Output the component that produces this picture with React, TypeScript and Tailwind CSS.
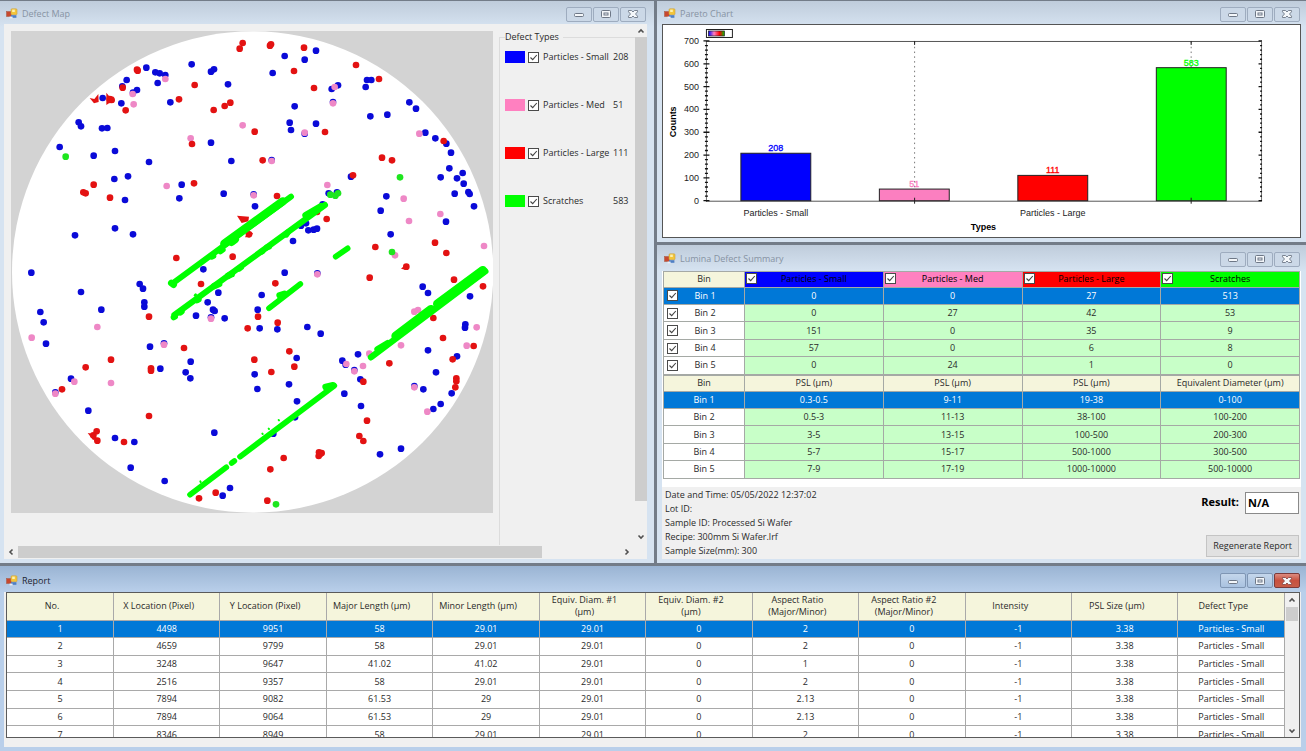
import clsx from "clsx";
import type { ReactNode } from "react";

type Point = [number, number];

const defectTypes = [
  { name: "Particles - Small", count: 208, swatch: "bg-[#0000ff]", color: "#0000ff" },
  { name: "Particles - Med", count: 51, swatch: "bg-[#ff80c0]", color: "#fb7fc0" },
  { name: "Particles - Large", count: 111, swatch: "bg-[#ff0000]", color: "#ff0000" },
  { name: "Scratches", count: 583, swatch: "bg-[#00ff00]", color: "#00ff00" },
];

// Wafer defects, one entry per quadrant, in thirds of a pixel
const quadrants: { dx: number; dy: number; blue: Point[]; pink: Point[]; red: Point[]; green: Point[] }[] = [
  {
    dx: 0,
    dy: 0,
    blue: [
      [436, 203], [463, 217], [476, 220], [493, 225], [470, 249], [572, 193], [639, 208], [630, 215], [681, 253],
      [377, 240], [364, 259], [408, 270], [396, 278], [361, 310], [508, 307], [305, 294], [233, 367], [240, 379],
      [303, 385], [319, 384], [176, 441], [278, 467], [342, 453], [444, 486], [630, 428], [691, 483], [381, 529],
      [340, 537], [372, 600], [542, 554], [535, 595], [668, 581], [758, 583], [762, 619], [342, 685], [396, 703],
      [222, 706],
    ],
    pink: [[493, 237], [395, 282], [398, 313], [725, 376], [569, 415], [497, 558], [758, 586]],
    red: [
      [725, 129], [716, 146], [410, 212], [408, 209], [365, 263], [581, 255], [534, 298], [688, 308], [671, 318],
      [638, 330], [374, 331], [326, 297], [332, 300], [573, 432], [579, 550], [278, 554], [247, 577], [254, 580],
      [327, 593], [526, 774], [695, 770], [744, 703],
    ],
    green: [[194, 470]],
  },
  {
    dx: 720,
    dy: 0,
    blue: [
      [131, 168], [225, 152], [191, 179], [95, 219], [272, 267], [291, 256], [276, 306], [161, 319], [146, 368],
      [150, 390], [225, 371], [191, 401], [378, 240], [391, 240], [374, 261], [388, 349], [439, 344], [505, 307],
      [525, 326], [553, 398], [583, 415], [616, 431], [630, 458], [625, 505], [599, 532], [648, 535], [665, 519],
      [668, 551], [641, 581], [682, 576], [686, 582], [699, 619], [615, 665], [436, 589], [419, 632], [449, 703],
      [330, 530], [263, 580], [288, 577], [92, 480], [180, 677], [195, 670], [202, 691], [218, 689], [228, 686],
      [156, 723], [245, 613],
    ],
    pink: [
      [281, 261], [276, 310], [191, 398], [535, 401], [92, 483], [259, 555], [488, 596], [504, 663], [598, 642],
      [729, 738], [462, 766],
    ],
    red: [
      [90, 133], [87, 137], [189, 143], [159, 213], [219, 264], [345, 195], [414, 237], [252, 396], [41, 395],
      [65, 481], [608, 423], [423, 473], [453, 481], [336, 526], [108, 588], [228, 636], [257, 657], [403, 741],
      [582, 728], [616, 759], [496, 800],
    ],
    green: [[477, 532], [453, 756], [268, 584], [283, 587], [291, 580]],
  },
  {
    dx: 0,
    dy: 780,
    blue: [
      [91, 38], [240, 96], [118, 156], [128, 187], [135, 251], [301, 149], [416, 72], [426, 86], [430, 127],
      [430, 140], [447, 260], [478, 326], [569, 305], [554, 337], [568, 355], [607, 28], [652, 98], [620, 127],
      [585, 167], [636, 149], [641, 153], [671, 175], [630, 172], [210, 356], [163, 397], [262, 452], [342, 534],
      [400, 546], [389, 623], [491, 663], [640, 518], [687, 684], [665, 707], [489, 250],
    ],
    pink: [[289, 201], [92, 233], [489, 254], [630, 176], [220, 365], [330, 369], [163, 401]],
    red: [
      [600, 72], [444, 170], [330, 299], [254, 322], [549, 264], [450, 325], [450, 332], [183, 388], [444, 468],
      [287, 514], [277, 526], [289, 542], [369, 546], [644, 698], [594, 715],
    ],
    green: [],
  },
  {
    dx: 720,
    dy: 780,
    blue: [
      [131, 38], [62, 105], [50, 149], [56, 205], [109, 208], [199, 201], [239, 221], [167, 294], [41, 343],
      [49, 387], [144, 373], [168, 424], [304, 302], [314, 314], [351, 283], [340, 330], [358, 358], [310, 401],
      [360, 438], [545, 80], [561, 99], [673, 193], [672, 203], [687, 109], [561, 271], [648, 289], [585, 337],
      [520, 378], [547, 388], [632, 400], [599, 432], [577, 447], [417, 583], [480, 566], [162, 472], [97, 521],
      [229, 40],
    ],
    pink: [
      [229, 43], [520, 155], [531, 150], [707, 202], [677, 257], [480, 256], [385, 281], [366, 318], [316, 312],
      [340, 334], [520, 382], [559, 455],
    ],
    red: [
      [103, 70], [51, 170], [20, 205], [110, 188], [145, 274], [40, 299], [160, 320], [91, 336], [386, 53],
      [639, 59], [726, 79], [577, 174], [606, 234], [698, 258], [635, 298], [646, 355], [646, 364], [643, 382],
      [445, 310], [367, 365], [378, 482], [355, 528], [367, 543], [128, 594], [88, 628], [79, 722], [234, 577],
      [242, 579], [233, 588], [238, 582],
    ],
    green: [[105, 733]],
  },
];

// x1, y1, x2, y2, width
const scratches = [
  [515, 850, 870, 590, 18],
  [670, 731, 845, 604, 25],
  [511, 849, 518, 854, 20],
  [632, 770, 637, 768, 18],
  [658, 754, 665, 749, 18],
  [692, 726, 702, 718, 24],
  [520, 945, 972, 615, 18],
  [518, 952, 522, 950, 18],
  [538, 938, 542, 935, 18],
  [640, 858, 654, 852, 20],
  [588, 900, 592, 898, 20],
  [582, 886, 584, 884, 8],
  [682, 827, 692, 822, 20],
  [714, 806, 720, 802, 18],
  [780, 756, 784, 754, 18],
  [798, 742, 804, 740, 18],
  [856, 704, 860, 698, 18],
  [915, 646, 960, 620, 22],
  [804, 925, 898, 852, 17],
  [836, 886, 850, 882, 20],
  [1004, 770, 1040, 745, 17],
  [1110, 1072, 1453, 814, 19],
  [1130, 1048, 1160, 1030, 20],
  [1184, 1008, 1290, 928, 26],
  [1310, 912, 1445, 812, 28],
  [567, 1484, 676, 1402, 17],
  [692, 1389, 700, 1383, 17],
  [717, 1370, 1000, 1157, 17],
  [974, 1161, 996, 1156, 20],
  [598, 1444, 599, 1446, 6],
  [784, 1301, 785, 1302, 6],
  [803, 1286, 804, 1287, 6],
  [833, 1260, 834, 1261, 6],
];

const wafer = {
  types: ["Particles - Small", "Particles - Med", "Particles - Large", "Scratches"],
  counts: [
    [0, 0, 27, 513],
    [0, 27, 42, 53],
    [151, 0, 35, 9],
    [57, 0, 6, 8],
    [0, 24, 1, 0],
  ],
  units: ["PSL (µm)", "PSL (µm)", "PSL (µm)", "Equivalent Diameter (µm)"],
  ranges: [
    ["0.3-0.5", "9-11", "19-38", "0-100"],
    ["0.5-3", "11-13", "38-100", "100-200"],
    ["3-5", "13-15", "100-500", "200-300"],
    ["5-7", "15-17", "500-1000", "300-500"],
    ["7-9", "17-19", "1000-10000", "500-10000"],
  ],
};

const reportColumns = [
  "No.",
  "X Location (Pixel)",
  "Y Location (Pixel)",
  "Major Length (µm)",
  "Minor Length (µm)",
  "Equiv. Diam. #1 (µm)",
  "Equiv. Diam. #2 (µm)",
  "Aspect Ratio (Major/Minor)",
  "Aspect Ratio #2 (Major/Minor)",
  "Intensity",
  "PSL Size (µm)",
  "Defect Type",
];

const reportRows = [
  ["1", "4498", "9951", "58", "29.01", "29.01", "0", "2", "0", "-1", "3.38", "Particles - Small"],
  ["2", "4659", "9799", "58", "29.01", "29.01", "0", "2", "0", "-1", "3.38", "Particles - Small"],
  ["3", "3248", "9647", "41.02", "41.02", "29.01", "0", "1", "0", "-1", "3.38", "Particles - Small"],
  ["4", "2516", "9357", "58", "29.01", "29.01", "0", "2", "0", "-1", "3.38", "Particles - Small"],
  ["5", "7894", "9082", "61.53", "29", "29.01", "0", "2.13", "0", "-1", "3.38", "Particles - Small"],
  ["6", "7894", "9064", "61.53", "29", "29.01", "0", "2.13", "0", "-1", "3.38", "Particles - Small"],
  ["7", "8346", "8949", "58", "29.01", "29.01", "0", "2", "0", "-1", "3.38", "Particles - Small"],
];

const FormIcon = () => (
  <svg viewBox="0 0 12 12" className="size-3 shrink-0">
    <rect x="0.5" y="3.5" width="5" height="5" fill="#c8482e" stroke="#a8604e" strokeWidth="0.6" />
    <rect x="5" y="0.8" width="6" height="6" rx="1" fill="#f3c53a" stroke="#c9a040" strokeWidth="0.6" />
    <rect x="6.2" y="1.6" width="2.6" height="2.4" fill="#fdf0b0" />
    <path d="M5 7.2h5.4v2.6H5z" fill="#4f7fc4" />
    <path d="M3.6 8.6h3v1.8h-3z" fill="#e9eef6" />
  </svg>
);

const CaptionButton = ({ kind, active }: { kind: "min" | "max" | "close"; active?: boolean }) => {
  const red = active && kind === "close";
  return (
    <button
      type="button"
      aria-label={kind}
      className={clsx(
        "w-[26px] h-[15px] flex items-center justify-center rounded-[2px] border",
        red
          ? "border-[#7c3a3a] bg-gradient-to-b from-[#dc8b80] via-[#c8503f] to-[#c75c48]"
          : active
            ? "border-[#7f96b4] bg-gradient-to-b from-[#c4d6eb] to-[#a9c2e0]"
            : "border-[#9eacbf] bg-[#cbd8e7]",
      )}
    >
      <svg viewBox="0 0 12 10" className="w-3 h-2.5" fill="#f4f7fa" stroke={red ? "#8a4a48" : "#6d7786"}>
        {kind === "min" && <rect x="1.5" y="4.5" width="9" height="3" rx="1" />}
        {kind === "max" && (
          <>
            <rect x="1.5" y="1.5" width="9" height="7" rx="1" />
            <rect x="4" y="4" width="4" height="2" fill="none" />
          </>
        )}
        {kind === "close" && (
          <path d="M1.500 1.500h3L6 3l1.500-1.500h3v1.300L8.500 5l2 2.200v1.300h-3L6 7 4.500 8.500h-3V7.200l2-2.200-2-2.200z" strokeWidth="0.9" />
        )}
      </svg>
    </button>
  );
};

interface WindowProps {
  title: string;
  active?: boolean;
  className?: string;
  titleClass: string;
  children: ReactNode;
}

const Window = ({ title, active, className, titleClass, children }: WindowProps) => (
  <section
    className={clsx(
      "flex flex-col min-w-0 border-t border-[#737c88] pb-1",
      active
        ? "bg-[linear-gradient(#9ab4d3,#b9cfea_26px,#b9cfea)]"
        : "bg-[linear-gradient(#bfccdb,#d6e3f1_26px,#d6e3f1)]",
      className,
    )}
  >
    <header className={clsx("flex items-center gap-1 pl-0.5 pt-[3px] pr-px shrink-0", titleClass)}>
      <FormIcon />
      <h2 className={clsx("flex-1 text-[9px]", active ? "text-[#1c2430]" : "text-[#8793a3]")}>{title}</h2>
      <div className="flex gap-px">
        <CaptionButton kind="min" active={active} />
        <CaptionButton kind="max" active={active} />
        <CaptionButton kind="close" active={active} />
      </div>
    </header>
    {children}
  </section>
);

const Check = ({ label, className }: { label: string; className?: string }) => (
  <span className={clsx("inline-block size-[11px] shrink-0", className ?? "relative")}>
    <input
      type="checkbox"
      defaultChecked
      aria-label={label}
      className="peer block appearance-none size-[11px] bg-white border border-[#4a4a4a]"
    />
    <svg
      viewBox="0 0 11 11"
      className="pointer-events-none absolute inset-0 hidden peer-checked:block"
      fill="none"
      stroke="#444"
      strokeWidth="1.1"
    >
      <path d="M2.500 5.500l2.200 2.200L8.800 3" />
    </svg>
  </span>
);

const Arrow = ({ d }: { d: string }) => (
  <svg viewBox="0 0 8 8" className="size-2" fill="none" stroke="#505050" strokeWidth="1.6">
    <path d={d} />
  </svg>
);

const arrows = {
  up: "M1.500 5.500L4 3l2.500 2.500",
  down: "M1.500 2.500L4 5l2.500-2.500",
  left: "M5.500 1.500L3 4l2.500 2.500",
  right: "M2.500 1.500L5 4 2.500 6.500",
};

const Dots = ({ points, fill }: { points: Point[]; fill: string }) => (
  <g fill={fill}>
    {points.map(([x, y], i) => (
      <circle key={i} cx={x} cy={y} r="10" />
    ))}
  </g>
);

const WaferMap = () => (
  <svg viewBox="30 93 1446 1446" className="block w-[482px] h-[482px] shrink-0">
    <rect x="30" y="93" width="1446" height="1446" fill="#d3d3d3" />
    <circle cx="755" cy="816" r="722" fill="#fff" />
    {quadrants.map((q, i) => (
      <g key={i} transform={`translate(${q.dx} ${q.dy})`}>
        <Dots points={q.blue} fill="#0a0ad8" />
        <Dots points={q.pink} fill="#ee88c6" />
        <Dots points={q.red} fill="#e31212" />
      </g>
    ))}
    <g fill="#e31212">
      <path d="M266 294l14 3 12-15 1 24-14 4z" />
      <path d="M316 278l8 10 14 2v18l-14 2-8 5z" />
      <path d="M708 647l36 3-2 14-20 5z" />
      <path d="M732 712l10-20 14 8-8 12z" />
      <path d="M260 1299l22 3 6 14-12 4z" />
      <path d="M1200 806l16-14v18z" />
    </g>
    <g stroke="#00ff00" strokeLinecap="round">
      {scratches.map(([x1, y1, x2, y2, w], i) => (
        <line key={i} x1={x1} y1={y1} x2={x2} y2={y2} strokeWidth={w} />
      ))}
    </g>
    {quadrants.map((q, i) => (
      <g key={i} transform={`translate(${q.dx} ${q.dy})`}>
        <Dots points={q.green} fill="#1ee61e" />
      </g>
    ))}
  </svg>
);

const DefectMap = () => (
  <Window title="Defect Map" titleClass="h-[23px]" className="border-r-2 border-b-2 pl-1 pr-[7px]">
    <div className="flex-1 flex flex-col bg-[#f0f0f0]">
      <div className="flex-1 flex pl-[7px]">
        <div className="pt-[7px] pb-8">
          <WaferMap />
        </div>
        <div className="flex-1 flex pt-[7px] pl-1.5">
          <fieldset className="flex-1 border-l border-t border-[#dcdcdc] pl-[5px] pr-1 min-w-0">
            <legend className="text-[9px] leading-3 pr-1">Defect Types</legend>
            <ul className="flex flex-col gap-9 pt-2">
              {defectTypes.map((type) => (
                <li key={type.name} className="flex items-center h-3 text-[9px]">
                  <span className={clsx("w-5 h-3 shrink-0", type.swatch)} />
                  <span className="flex items-center pl-[3px] pr-1">
                    <Check label={type.name} />
                  </span>
                  <span className="flex-1 whitespace-nowrap">{type.name}</span>
                  <span className="w-[18px]">{type.count}</span>
                </li>
              ))}
            </ul>
          </fieldset>
        </div>
        <div className="w-3 flex flex-col items-center">
          <span className="h-[13px] flex items-center">
            <Arrow d={arrows.up} />
          </span>
          <span className="flex-1 w-full bg-[#cdcdcd]" />
          <span className="h-11 flex items-end pb-1">
            <Arrow d={arrows.down} />
          </span>
        </div>
      </div>
      <div className="h-[14px] flex items-center">
        <span className="w-3.5 flex justify-center">
          <Arrow d={arrows.left} />
        </span>
        <span className="w-[524px] h-3 bg-[#cdcdcd]" />
        <span className="flex-1 flex justify-end pr-4">
          <Arrow d={arrows.right} />
        </span>
      </div>
    </div>
  </Window>
);

const plot = { left: 706, right: 1262, top: 41, bottom: 201, max: 700 };
const yOf = (value: number) => plot.bottom - (value / plot.max) * (plot.bottom - plot.top);

const ParetoChart = () => (
  <Window title="Pareto Chart" titleClass="h-[23px]" className="border-b-2 border-l pl-[5px] pr-[5px]">
    <svg
      viewBox="663 25 638 212"
      className="block w-full bg-white border border-[#555]"
      fontFamily="Liberation Sans, sans-serif"
      fontSize="9"
    >
      <defs>
        <linearGradient id="legend">
          <stop offset="0" stopColor="#0000ff" />
          <stop offset="0.35" stopColor="#ff80c0" />
          <stop offset="0.7" stopColor="#ff0000" />
          <stop offset="1" stopColor="#00c000" />
        </linearGradient>
      </defs>
      <rect x="706.5" y="29.5" width="26" height="8" fill="#fff" stroke="#222" />
      <rect x="708.500" y="31" width="16" height="5" fill="url(#legend)" stroke="#222" strokeWidth="0.7" />

      <path d="M706 41.500H1262M706 201.500H1262" stroke="#555" />
      <path d="M706.500 41V202M1262.500 41V202" stroke="#333" strokeWidth="0.7" />
      {Array.from({ length: 36 }, (_, i) => {
        const y = yOf(i * 20);
        const len = i % 5 === 0 ? 3 : 1.5;
        return (
          <path
            key={i}
            d={`M${706.5 - len} ${y}H${706.5 + len}M${1262.500 - len} ${y}H1263`}
            stroke="#111"
            strokeWidth="1.300"
          />
        );
      })}
      {[0, 100, 200, 300, 400, 500, 600, 700].map((value) => (
        <text key={value} x="699" y={yOf(value) + 3} textAnchor="end" fill="#222">
          {value}
        </text>
      ))}

      <path d="M915 42V201M1192 42V201" stroke="#777" strokeDasharray="1.500 3.300" />
      {defectTypes.map((type, i) => {
        const center = 776 + i * 138.7;
        const y = yOf(type.count);
        return (
          <g key={type.name}>
            <rect x={center - 35} y={y} width="70" height={plot.bottom - y} fill={type.color} stroke="#222" />
            <text x={center} y={y - 2} textAnchor="middle" fill={type.color} stroke={type.color} strokeWidth="0.300">
              {type.count}
            </text>
            {i % 2 === 0 && (
              <text x={center} y="216" textAnchor="middle" fill="#222">
                {type.name}
              </text>
            )}
          </g>
        );
      })}
      <path d="M915 41v4M1192 41v4M915 198v6M1192 198v6" stroke="#222" />
      <text x="984" y="230" textAnchor="middle" fontWeight="bold">
        Types
      </text>
      <text transform="translate(676 122) rotate(-90)" textAnchor="middle" fontWeight="bold">
        Counts
      </text>
    </svg>
  </Window>
);

const columnFills = ["bg-[#0000ff]", "bg-[#ff80c0]", "bg-[#ff0000]", "bg-[#00ff00]"];

const summaryCell = (row: number, green: boolean) =>
  clsx(
    "p-0 border border-[#a5a9a5]",
    row === 0 ? "bg-[#0078d7] text-white" : green ? "bg-[#c8ffc8]" : "bg-white",
  );

const SummaryColumns = () => (
  <colgroup>
    <col className="w-[81px]" />
    <col />
    <col />
    <col />
    <col />
  </colgroup>
);

const DefectSummary = () => (
  <Window
    title="Lumina Defect Summary"
    titleClass="h-[26px]"
    className="flex-1 border-b-2 border-l pl-[5px] pr-[5px]"
  >
    <div className="bg-white px-px pb-2 text-[9px] leading-3">
      <table className="w-full h-[104px] table-fixed border-collapse text-center">
        <SummaryColumns />
        <thead>
          <tr className="h-4">
            <th className="p-0 font-normal border border-[#a5a9a5] bg-[#f5f5dc]">Bin</th>
            {wafer.types.map((type, i) => (
              <th
                key={type}
                className={clsx("relative p-0 font-normal text-black border border-[#a5a9a5]", columnFills[i])}
              >
                <Check label={type} className="absolute left-px top-px" />
                {type}
              </th>
            ))}
          </tr>
        </thead>
        <tbody>
          {wafer.counts.map((row, r) => (
            <tr key={r}>
              <th className={clsx("font-normal", summaryCell(r, false))}>
                <div className="flex items-center pl-[3px] pr-3">
                  <Check label={`Bin ${r + 1}`} />
                  <span className="flex-1">Bin {r + 1}</span>
                </div>
              </th>
              {row.map((value, c) => (
                <td key={c} className={summaryCell(r, true)}>
                  {value}
                </td>
              ))}
            </tr>
          ))}
        </tbody>
      </table>
      <table className="w-full h-[104px] table-fixed border-collapse text-center">
        <SummaryColumns />
        <thead>
          <tr className="h-4">
            <th className="p-0 font-normal border border-[#a5a9a5] bg-[#f5f5dc]">Bin</th>
            {wafer.units.map((unit, i) => (
              <th key={i} className="p-0 font-normal border border-[#a5a9a5] bg-[#f5f5dc]">
                {unit}
              </th>
            ))}
          </tr>
        </thead>
        <tbody>
          {wafer.ranges.map((row, r) => (
            <tr key={r}>
              <th className={clsx("font-normal", summaryCell(r, false))}>Bin {r + 1}</th>
              {row.map((value, c) => (
                <td key={c} className={summaryCell(r, true)}>
                  {value}
                </td>
              ))}
            </tr>
          ))}
        </tbody>
      </table>
    </div>
    <div className="flex-1 flex justify-between bg-[#f0f0f0] pl-[3px] pr-0.5 pt-px text-[9px]">
      <div className="leading-[14px]">
        <p>Date and Time: 05/05/2022 12:37:02</p>
        <p>Lot ID:</p>
        <p>Sample ID: Processed Si Wafer</p>
        <p>Recipe: 300mm Si Wafer.lrf</p>
        <p>Sample Size(mm): 300</p>
      </div>
      <div className="flex flex-col items-end justify-between pt-1 pb-0.5">
        <label className="flex items-center gap-1.5 text-[11px] font-bold text-black">
          Result:
          <input readOnly defaultValue="N/A" className="w-[54px] h-[22px] bg-white border border-[#8a8a8a] px-0.5" />
        </label>
        <button type="button" className="h-[22px] px-1.5 bg-[#e1e1e1] border border-[#c4c4c4]">
          Regenerate Report
        </button>
      </div>
    </div>
  </Window>
);

const Report = () => (
  <Window title="Report" active titleClass="h-[26px]" className="flex-1 pl-1 pr-[5px]">
    <div className="flex-1 flex flex-col bg-[#f0f0f0] pl-0.5 pr-px pb-2">
      <div className="h-[146px] flex border border-[#5a5a5a] overflow-hidden">
        <div className="flex-1 min-w-0">
          <table className="w-full h-[151px] table-fixed border-collapse text-center text-[9px] leading-3 bg-white">
            <thead>
              <tr className="h-[27px]">
                {reportColumns.map((name) => (
                  <th key={name} className="p-0 pl-1 pr-5 font-normal border-r border-b border-[#a9a9a9] bg-[#f5f5dc]">
                    {name}
                  </th>
                ))}
              </tr>
            </thead>
            <tbody>
              {reportRows.map((row, r) => (
                <tr key={row[0]} className={clsx(r === 0 && "bg-[#0078d7] text-white")}>
                  {row.map((value, c) => (
                    <td key={c} className="p-0 border-r border-b border-[#a9a9a9]">
                      {value}
                    </td>
                  ))}
                </tr>
              ))}
            </tbody>
          </table>
        </div>
        <div className="w-3.5 flex flex-col items-center justify-between bg-[#f0f0f0]">
          <div className="w-full flex flex-col items-center">
            <span className="h-3.5 flex items-center">
              <Arrow d={arrows.up} />
            </span>
            <span className="w-3 h-3.5 bg-[#cdcdcd]" />
          </div>
          <span className="h-3 flex items-center">
            <Arrow d={arrows.down} />
          </span>
        </div>
      </div>
    </div>
  </Window>
);

export default function App() {
  return (
    <main className="min-h-screen flex flex-col bg-[#737c88] font-['Open_Sans',sans-serif] text-[#2a2a2a]">
      <div className="grid grid-cols-[656fr_650fr]">
        <DefectMap />
        <div className="flex flex-col min-w-0">
          <ParetoChart />
          <DefectSummary />
        </div>
      </div>
      <Report />
    </main>
  );
}
